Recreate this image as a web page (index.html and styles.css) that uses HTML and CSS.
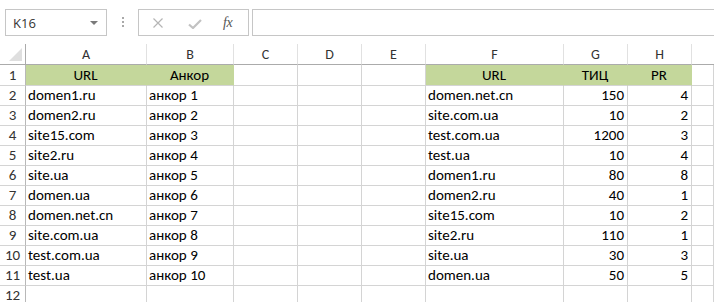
FILE: index.html
```html
<!DOCTYPE html>
<html>
<head>
<meta charset="utf-8">
<link rel="stylesheet" href="styles.css">
</head>
<body>
<div class="toolbar">
  <div class="namebox">
    <span class="name">K16</span>
    <svg class="caret" width="8" height="4" viewBox="0 0 8 4"><path d="M0 0H8L4 4Z" fill="#7a7a7a"/></svg>
  </div>
  <div class="dots"><i></i><i></i><i></i></div>
  <div class="fbtns">
    <svg class="ico" width="10" height="10" viewBox="0 0 10 10"><path d="M0.5 0.5L9.5 9.5M9.5 0.5L0.5 9.5" stroke="#b5b5b5" stroke-width="1.2" fill="none"/></svg>
    <svg class="ico" width="14" height="10" viewBox="0 0 14 10"><path d="M1 5.5L5 9L13 1" stroke="#c2c2c2" stroke-width="2.2" fill="none"/></svg>
    <span class="fx">fx</span>
  </div>
  <div class="fbar"></div>
</div>
<div class="sheet">
  <div class="corner"><svg width="13" height="13" viewBox="0 0 13 13"><path d="M13 0V13H0Z" fill="#dfdfdf"/></svg></div>
  <div class="ch">A</div><div class="ch">B</div><div class="ch">C</div><div class="ch">D</div><div class="ch">E</div><div class="ch">F</div><div class="ch">G</div><div class="ch">H</div><div class="ch last"></div>

  <div class="rh r1">1</div><div class="c g ctr r1">URL</div><div class="c g ctr r1">Анкор</div><div class="c r1"></div><div class="c r1"></div><div class="c r1"></div><div class="c g ctr r1">URL</div><div class="c g ctr r1">ТИЦ</div><div class="c g ctr r1">PR</div><div class="c r1"></div>

  <div class="rh">2</div><div class="c">domen1.ru</div><div class="c">анкор 1</div><div class="c"></div><div class="c"></div><div class="c"></div><div class="c">domen.net.cn</div><div class="c num">150</div><div class="c num">4</div><div class="c"></div>
  <div class="rh">3</div><div class="c">domen2.ru</div><div class="c">анкор 2</div><div class="c"></div><div class="c"></div><div class="c"></div><div class="c">site.com.ua</div><div class="c num">10</div><div class="c num">2</div><div class="c"></div>
  <div class="rh">4</div><div class="c">site15.com</div><div class="c">анкор 3</div><div class="c"></div><div class="c"></div><div class="c"></div><div class="c">test.com.ua</div><div class="c num">1200</div><div class="c num">3</div><div class="c"></div>
  <div class="rh">5</div><div class="c">site2.ru</div><div class="c">анкор 4</div><div class="c"></div><div class="c"></div><div class="c"></div><div class="c">test.ua</div><div class="c num">10</div><div class="c num">4</div><div class="c"></div>
  <div class="rh">6</div><div class="c">site.ua</div><div class="c">анкор 5</div><div class="c"></div><div class="c"></div><div class="c"></div><div class="c">domen1.ru</div><div class="c num">80</div><div class="c num">8</div><div class="c"></div>
  <div class="rh">7</div><div class="c">domen.ua</div><div class="c">анкор 6</div><div class="c"></div><div class="c"></div><div class="c"></div><div class="c">domen2.ru</div><div class="c num">40</div><div class="c num">1</div><div class="c"></div>
  <div class="rh">8</div><div class="c">domen.net.cn</div><div class="c">анкор 7</div><div class="c"></div><div class="c"></div><div class="c"></div><div class="c">site15.com</div><div class="c num">10</div><div class="c num">2</div><div class="c"></div>
  <div class="rh">9</div><div class="c">site.com.ua</div><div class="c">анкор 8</div><div class="c"></div><div class="c"></div><div class="c"></div><div class="c">site2.ru</div><div class="c num">110</div><div class="c num">1</div><div class="c"></div>
  <div class="rh">10</div><div class="c">test.com.ua</div><div class="c">анкор 9</div><div class="c"></div><div class="c"></div><div class="c"></div><div class="c">site.ua</div><div class="c num">30</div><div class="c num">3</div><div class="c"></div>
  <div class="rh">11</div><div class="c">test.ua</div><div class="c">анкор 10</div><div class="c"></div><div class="c"></div><div class="c"></div><div class="c">domen.ua</div><div class="c num">50</div><div class="c num">5</div><div class="c"></div>
  <div class="rh">12</div><div class="c"></div><div class="c"></div><div class="c"></div><div class="c"></div><div class="c"></div><div class="c"></div><div class="c"></div><div class="c"></div><div class="c"></div>
</div>
</body>
</html>
```

FILE: styles.css
```css
html, body {
  margin: 0;
  padding: 0;
  background: #fff;
  overflow: hidden;
}
body {
  width: 714px;
  height: 302px;
  font-family: Carlito, Lato, "Liberation Sans", sans-serif;
  color: #000;
}
.toolbar {
  height: 44px;
  display: flex;
  align-items: flex-start;
  padding: 9px 0 0 5px;
  box-sizing: border-box;
}
.namebox {
  width: 102px;
  height: 27px;
  box-sizing: border-box;
  border: 1px solid #c6c6c6;
  display: flex;
  align-items: center;
  justify-content: space-between;
  padding: 0 8px 0 7px;
}
.name {
  font-family: "Open Sans", "Noto Sans", sans-serif;
  font-size: 13px;
  color: #333;
}
.caret { margin-top: 1px; }
.dots {
  width: 2px;
  margin: 8px 14px 0 15px;
  display: flex;
  flex-direction: column;
  gap: 2px;
}
.dots i {
  display: block;
  width: 2px;
  height: 2px;
  background: #a9a9a9;
}
.fbtns {
  width: 111px;
  height: 27px;
  box-sizing: border-box;
  border: 1px solid #c6c6c6;
  display: flex;
  align-items: center;
  padding: 0 0 0 14px;
  gap: 0;
}
.fbtns .ico:first-child { margin-right: 25px; }
.fbtns .ico:nth-child(2) { margin-right: 21px; margin-top: 2px; }
.fx {
  font-family: "Liberation Serif", serif;
  font-style: italic;
  font-size: 14px;
  color: #555;
  letter-spacing: -0.5px;
}
.fbar {
  flex: 1;
  height: 27px;
  box-sizing: border-box;
  border: 1px solid #c6c6c6;
  border-right: none;
  margin-left: 3px;
}
.sheet {
  display: grid;
  grid-template-columns: 26px 121px 87px 64px 64px 64px 138px 64px 64px 1fr;
  grid-template-rows: 21px 21px repeat(11, 20px);
  font-size: 15px;
}
.sheet > div {
  box-sizing: border-box;
  border-right: 1px solid #d4d4d4;
  border-bottom: 1px solid #d4d4d4;
  white-space: nowrap;
  overflow: hidden;
}
.corner {
  display: flex;
  align-items: flex-end;
  justify-content: flex-end;
  padding: 0 3px 3px 0;
  border-bottom-color: #ababab !important;
  border-right-color: #ababab !important;
}
.corner svg { display: block; }
.ch {
  text-align: center;
  color: #333;
  font-size: 14px;
  line-height: 20px;
  padding-top: 1px;
  border-right-color: #e1e1e1 !important;
  border-bottom-color: #ababab !important;
}
.ch.last { border-right: none !important; }
.rh {
  text-align: center;
  color: #333;
  line-height: 19px;
  border-right-color: #b8b8b8 !important;
}
.c {
  line-height: 19px;
  padding: 0 3px 0 2px;
}
.r1 { line-height: 20px; }
.ctr { text-align: center; }
.num { text-align: right; }
.g {
  background: #c4d79b;
  border-right-color: #c4d79b !important;
}
```
